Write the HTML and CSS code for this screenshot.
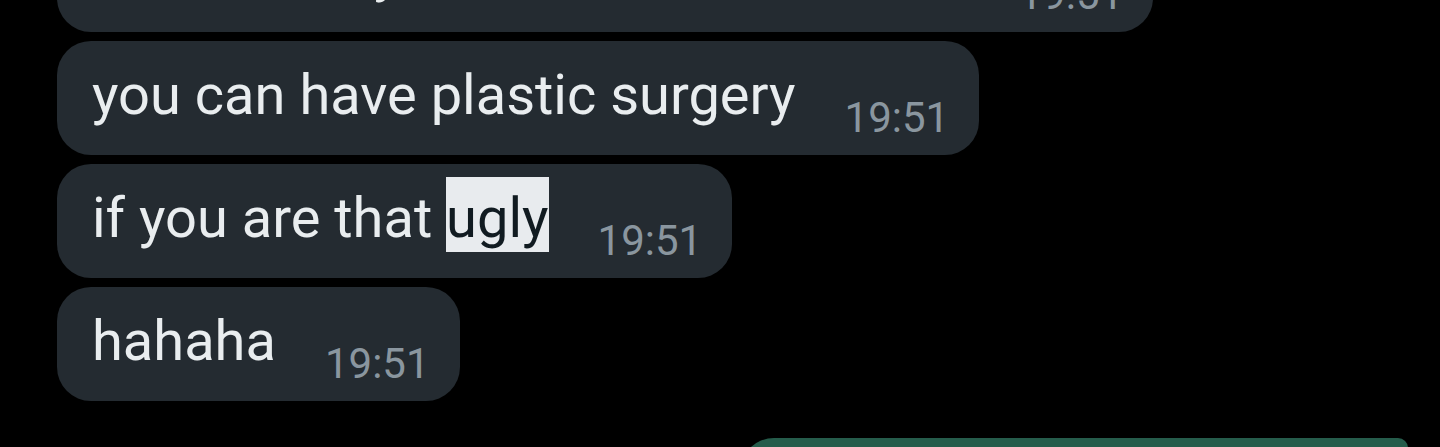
FILE: index.html
```html
<!DOCTYPE html>
<html lang="en">
<head>
<meta charset="utf-8">
<title>Chat</title>
<link rel="stylesheet" href="styles.css">
</head>
<body>
<div class="chat">
  <div class="bubble in first">
    <span class="msg">its not that you're that bad at all bro</span>
    <span class="time">19:51</span>
  </div>
  <div class="bubble in">
    <span class="msg">you can have plastic surgery</span>
    <span class="time">19:51</span>
  </div>
  <div class="bubble in">
    <span class="msg">if you are that <span class="sel">ugly</span></span>
    <span class="time">19:51</span>
  </div>
  <div class="bubble in">
    <span class="msg">hahaha</span>
    <span class="time">19:51</span>
  </div>
  <div class="bubble out"></div>
</div>
</body>
</html>
```
FILE: styles.css
```css
html, body {
  margin: 0;
  padding: 0;
  background: #000000;
  height: 100%;
  overflow: hidden;
}

.chat {
  display: flex;
  flex-direction: column;
  align-items: flex-start;
  gap: 9px;
  padding-left: 57px;
  margin-top: -82px;
  font-family: Roboto, "Noto Sans", sans-serif;
}

.bubble {
  display: flex;
  align-items: flex-end;
  box-sizing: border-box;
  height: 114px;
  padding: 17px 30px 22px 35px;
  border-radius: 34px;
  background: #242b31;
}

.msg {
  font-size: 56px;
  line-height: 75px;
  color: #e9edef;
  white-space: nowrap;
}

.sel {
  background: #e8ebee;
  color: #111b21;
  padding: 8px 0 1px;
}

.time {
  font-size: 42px;
  line-height: 42px;
  color: #8a969f;
  margin-left: 49px;
  margin-bottom: -6px;
  white-space: nowrap;
}

.out {
  align-self: flex-end;
  width: 668px;
  height: 100px;
  margin-right: 32px;
  margin-top: 28px;
  padding: 0;
  background: #255c4b;
  border-radius: 34px 10px 34px 34px;
}
```
